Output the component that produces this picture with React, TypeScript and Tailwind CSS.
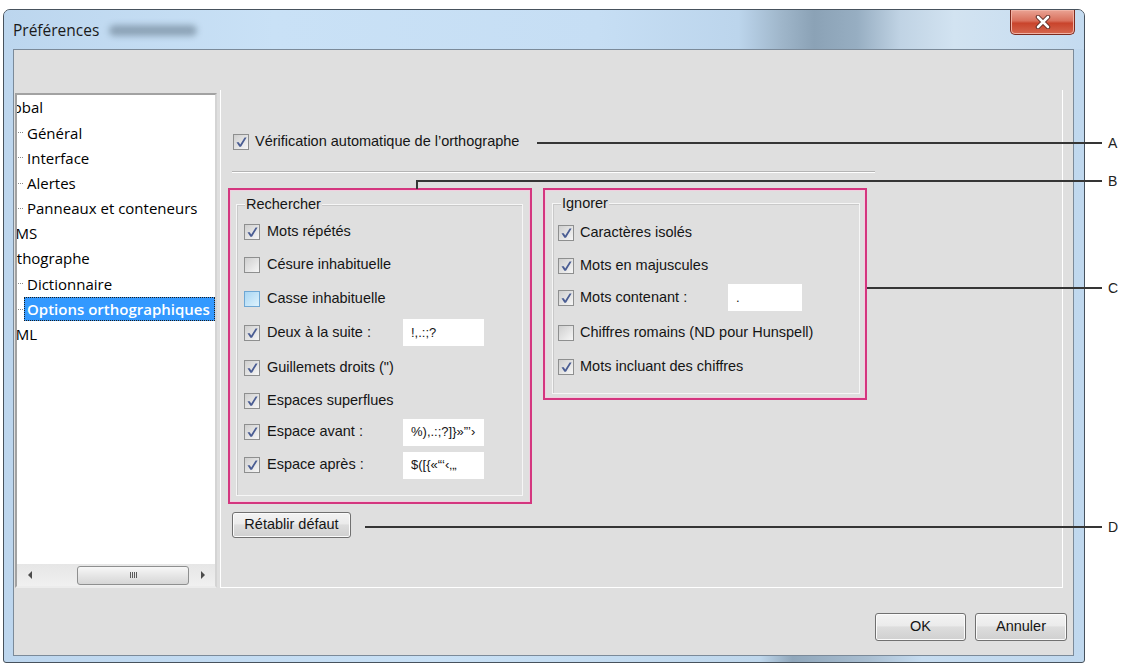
import React from 'react';

type Opt = { label: string; on?: boolean; hot?: boolean; h: string; value?: string };

// group "Rechercher"
const searchRows: Opt[] = [
  { label: 'Mots répétés', on: true, h: 'h-[32px]' },
  { label: 'Césure inhabituelle', h: 'h-[34px]' },
  { label: 'Casse inhabituelle', hot: true, h: 'h-[33px]' },
  { label: 'Deux à la suite :', on: true, h: 'h-[35px]', value: '!,.:;?' },
  { label: 'Guillemets droits (")', on: true, h: 'h-[35px]' },
  { label: 'Espaces superflues', on: true, h: 'h-[31px]' },
  { label: 'Espace avant :', on: true, h: 'h-[32px]', value: '%),.:;?]}»”’›' },
  { label: 'Espace après :', on: true, h: 'h-[34px]', value: '$([{«“‘‹‚„' },
];

// group "Ignorer"
const ignoreRows: Opt[] = [
  { label: 'Caractères isolés', on: true, h: 'h-[33px]' },
  { label: 'Mots en majuscules', on: true, h: 'h-[33px]' },
  { label: 'Mots contenant :', on: true, h: 'h-[31px]', value: '.' },
  { label: 'Chiffres romains (ND pour Hunspell)', h: 'h-[40px]' },
  { label: 'Mots incluant des chiffres', on: true, h: 'h-[28px]' },
];

const tree = [
  { name: 'Global', root: true, cut: '-ml-[19px]' },
  { name: 'Général' },
  { name: 'Interface' },
  { name: 'Alertes' },
  { name: 'Panneaux et conteneurs' },
  { name: 'CMS', root: true, cut: '-ml-[11px]' },
  { name: 'Orthographe', root: true, cut: '-ml-[18px]' },
  { name: 'Dictionnaire' },
  { name: 'Options orthographiques', selected: true },
  { name: 'XML', root: true, cut: '-ml-[10px]' },
];

function Checkbox({ on, hot }: { on?: boolean; hot?: boolean }) {
  return (
    <span
      className={
        hot
          ? 'flex h-[16px] w-[16px] shrink-0 items-center justify-center border border-[#6ea7d4] bg-[linear-gradient(135deg,#a9d6f3,#def2fc)]'
          : 'flex h-[16px] w-[16px] shrink-0 items-center justify-center border border-[#8e8f8f] bg-[linear-gradient(135deg,#cfcfcf,#f6f6f6)]'
      }
    >
      {on && (
        <svg width="14" height="14" viewBox="0 0 14 14">
          <path d="M2.5 7.2 L4.8 7.2 L6.2 9.4 L10.6 2.4 L12.6 2.4 L7 11.8 L5.4 11.8 Z" fill="#4a5d93" />
        </svg>
      )}
    </span>
  );
}

function Field({ value, w }: { value: string; w: string }) {
  return (
    <div className={'flex h-[27px] items-center bg-white pl-[8px] text-[13px] whitespace-nowrap overflow-hidden ' + w}>
      {value}
    </div>
  );
}

function WinButton({ label, w, h }: { label: string; w: string; h: string }) {
  return (
    <button
      className={
        'flex items-center justify-center rounded-[3px] border border-[#707070] bg-[linear-gradient(#f3f3f3,#ebebeb_45%,#dddddd_50%,#d0d0d0)] font-normal text-[#151515] shadow-[inset_0_0_0_1px_#fbfbfb] ' +
        w +
        ' ' +
        h
      }
    >
      {label}
    </button>
  );
}

function Tree() {
  return (
    <div className="ml-[1px] mt-[3px] flex h-[495px] w-[202px] flex-col border-2 border-[#a2a2a2] border-r-[#d4d4d4] border-b-[#ececec] bg-white font-['Open_Sans','Noto_Sans',sans-serif] text-[15px] text-black">
      <div className="flex-1 overflow-hidden">
        {tree.map((t) => (
          <div key={t.name} className="flex h-[25.2px] items-center overflow-hidden whitespace-nowrap">
            {t.root ? (
              <span className={t.cut}>{t.name}</span>
            ) : (
              <>
                <span className="ml-[1px] w-[5px] border-t border-dotted border-[#8a8a8a]" />
                <span
                  className={
                    t.selected
                      ? 'ml-[1px] flex h-[24px] flex-1 items-center bg-[#3399ff] pl-[3px] font-semibold text-white outline-1 outline-dotted outline-[#1d1d1d] -outline-offset-1'
                      : 'ml-[1px] pl-[3px]'
                  }
                >
                  {t.name}
                </span>
              </>
            )}
          </div>
        ))}
      </div>
      {/* horizontal scrollbar */}
      <div className="flex h-[22px] items-center bg-[linear-gradient(to_bottom,#e6e6e6,#f0f0f0)]">
        <div className="flex w-[26px] justify-center">
          <span className="h-0 w-0 border-y-[4px] border-r-[4px] border-y-transparent border-r-[#4c4c4c]" />
        </div>
        <div className="w-[34px]" />
        <div className="flex h-[19px] w-[112px] items-center justify-center gap-[1px] rounded-[3px] border border-[#8e8f8f] bg-[linear-gradient(#f7f7f7,#e6e6e6_50%,#d6d6d6)]">
          <span className="h-[6px] w-px bg-[#5a5a5a]" />
          <span className="h-[6px] w-px bg-[#5a5a5a]" />
          <span className="h-[6px] w-px bg-[#5a5a5a]" />
          <span className="h-[6px] w-px bg-[#5a5a5a]" />
        </div>
        <div className="flex-1" />
        <div className="flex w-[24px] justify-center">
          <span className="h-0 w-0 border-y-[4px] border-l-[4px] border-y-transparent border-l-[#4c4c4c]" />
        </div>
      </div>
    </div>
  );
}

function Panel() {
  return (
    <div className="ml-[3px] flex h-[498px] w-[843px] flex-col border-x border-b border-white pl-[7px]">
      <div className="ml-[5px] mt-[42px] flex h-[20px] items-center">
        <Checkbox on />
        <span className="ml-[6px]">Vérification automatique de l’orthographe</span>
      </div>
      <div className="ml-[4px] mt-[19px] h-[2px] w-[643px] border-t border-b border-t-[#b4b4b4] border-b-white" />

      <div className="mt-[15px] flex items-start">
        {/* Rechercher */}
        <div className="h-[316px] w-[304px] border-2 border-[#d4367f] shadow-[inset_0_0_0_1px_#f1cfdf]">
          <div className="ml-[6px] mt-[14px] h-[292px] w-[287px] border border-[#f6f6f6] shadow-[inset_1px_1px_0_#c9c9c9]">
            <div className="-mt-[9px] ml-[8px] w-fit bg-[#dfdfdf] px-[1px] leading-[17px]">Rechercher</div>
            <div className="mt-[3px] pl-[7px]">
              {searchRows.map((r) => (
                <div key={r.label} className={'flex items-center ' + r.h}>
                  <Checkbox on={r.on} hot={r.hot} />
                  <span className={'ml-[7px] whitespace-nowrap ' + (r.value ? 'w-[136px]' : '')}>{r.label}</span>
                  {r.value && <Field value={r.value} w="w-[81px]" />}
                </div>
              ))}
            </div>
          </div>
        </div>

        {/* Ignorer */}
        <div className="ml-[11px] h-[212px] w-[324px] border-2 border-[#d4367f] shadow-[inset_0_0_0_1px_#f1cfdf]">
          <div className="ml-[7px] mt-[13px] h-[191px] w-[308px] border border-[#f6f6f6] shadow-[inset_1px_1px_0_#c9c9c9]">
            <div className="-mt-[9px] ml-[8px] w-fit bg-[#dfdfdf] px-[1px] leading-[17px]">Ignorer</div>
            <div className="mt-[4px] pl-[5px]">
              {ignoreRows.map((r) => (
                <div key={r.label} className={'flex items-center ' + r.h}>
                  <Checkbox on={r.on} />
                  <span className={'ml-[6px] whitespace-nowrap ' + (r.value ? 'w-[148px]' : '')}>{r.label}</span>
                  {r.value && <Field value={r.value} w="w-[74px]" />}
                </div>
              ))}
            </div>
          </div>
        </div>
      </div>

      <div className="ml-[4px] mt-[8px]">
        <WinButton label="Rétablir défaut" w="w-[119px]" h="h-[26px]" />
      </div>
    </div>
  );
}

export default function App() {
  return (
    <div className="relative h-[667px] w-[1126px] overflow-hidden bg-white font-['Liberation_Sans',Arial,sans-serif] text-[14.5px] text-[#151515]">
      {/* dialog window */}
      <div className="ml-[3px] mt-[9px] flex h-[654px] w-[1082px] flex-col overflow-hidden rounded-t-[7px] rounded-b-[3px] border border-[#47525d] bg-[linear-gradient(to_right,#bdd6ee,#c8e0f5_40%,#bfd7ec_70%,#90a7bb_73%,#a9bed1_80%,#c6dcf0_85%,#c0d8ee)]">
        {/* title bar */}
        <div className="flex h-[39px] shrink-0 items-start bg-[linear-gradient(to_right,#bcd6ee_0%,#c9e1f6_25%,#c6def4_55%,#bcd5ec_68%,#9fb6ca_72%,#8ba2b6_75%,#97aec2_79%,#c0d3e4_83%,#d2e3f1_88%,#c4dbf0_100%)]">
          <span className="pl-[9px] pt-[10px] font-['Open_Sans','Noto_Sans',sans-serif] text-[15.5px] leading-[20px] text-[#1a1a1a]">
            Préférences
          </span>
          <span className="ml-[10px] mt-[15px] h-[11px] w-[88px] rounded-full bg-[#7f95a8] opacity-80 blur-[3px]" />
          <div className="ml-auto mr-[9px] flex h-[25px] w-[65px] items-center justify-center rounded-b-[5px] border border-t-0 border-[#7c2a1e] bg-[linear-gradient(#eaa394,#d9705c_45%,#c9442c_55%,#d5674f)] shadow-[inset_0_0_0_1px_#f0b3a6]">
            <svg width="18" height="14" viewBox="0 0 18 14">
              <path d="M4 2 L14 12 M14 2 L4 12" stroke="#5b2a24" strokeWidth="4.5" strokeLinecap="round" />
              <path d="M4 2 L14 12 M14 2 L4 12" stroke="#ffffff" strokeWidth="2.6" strokeLinecap="round" />
            </svg>
          </div>
        </div>

        {/* client */}
        <div className="flex flex-1 flex-col pb-[6px] pl-[9px] pr-[10px]">
          <div className="flex flex-1 flex-col border border-[#7b8a99] bg-[#dfdfdf]">
            <div className="mt-[40px] flex h-[498px]">
              <Tree />
              <Panel />
            </div>
            <div className="flex flex-1 items-start justify-end gap-[9px] pr-[6px] pt-[25px]">
              <WinButton label="OK" w="w-[91px]" h="h-[28px]" />
              <WinButton label="Annuler" w="w-[92px]" h="h-[28px]" />
            </div>
          </div>
        </div>
      </div>

      {/* callouts */}
      <div className="absolute left-[537px] top-[142px] h-[2px] w-[565px] bg-[#353535]" />
      <div className="absolute left-[416px] top-[180px] h-[9px] w-[2px] bg-[#353535]" />
      <div className="absolute left-[416px] top-[180px] h-[2px] w-[686px] bg-[#353535]" />
      <div className="absolute left-[867px] top-[287px] h-[2px] w-[235px] bg-[#353535]" />
      <div className="absolute left-[365px] top-[526px] h-[2px] w-[737px] bg-[#353535]" />
      <span className="absolute left-[1108px] top-[134px] text-[14px] leading-[18px] text-[#222]">A</span>
      <span className="absolute left-[1108px] top-[172px] text-[14px] leading-[18px] text-[#222]">B</span>
      <span className="absolute left-[1108px] top-[279px] text-[14px] leading-[18px] text-[#222]">C</span>
      <span className="absolute left-[1108px] top-[518px] text-[14px] leading-[18px] text-[#222]">D</span>
    </div>
  );
}
